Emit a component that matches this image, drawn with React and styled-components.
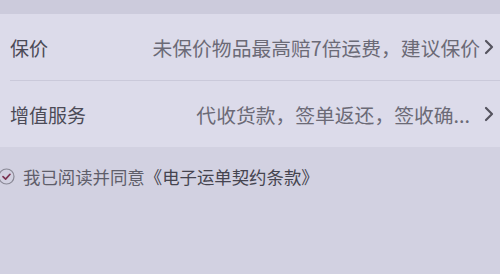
import React from "react";
import styled, { createGlobalStyle } from "styled-components";

const GlobalStyle = createGlobalStyle`
  html, body {
    margin: 0;
    padding: 0;
    background: #d2d1e1;
  }
  body {
    font-family: "Noto Sans CJK SC", "Noto Sans", sans-serif;
  }
`;

const Page = styled.div`
  width: 500px;
  height: 274px;
  overflow: hidden;
  background: #d2d1e1;
  display: flex;
  flex-direction: column;
`;

const TopBand = styled.div`
  height: 14px;
  background: #cccbdc;
`;

const Card = styled.div`
  background: #dcdbea;
  padding-left: 10px;
`;

const Row = styled.div`
  height: 66px;
  display: flex;
  align-items: center;
  padding-right: 6px;
  border-bottom: ${(p) => (p.$last ? "none" : "1px solid #cac9da")};
`;

const Label = styled.div`
  font-size: 19px;
  color: #4b4a56;
  flex-shrink: 0;
`;

const Value = styled.div`
  flex: 1;
  text-align: right;
  font-size: 19.8px;
  color: #6b6a76;
  white-space: nowrap;
  padding-right: ${(p) => p.$gap}px;
`;

const Arrow = styled.svg`
  width: 10px;
  height: 16px;
  flex-shrink: 0;
`;

const Agree = styled.div`
  display: flex;
  align-items: center;
  gap: 8px;
  margin-top: 17px;
`;

const Check = styled.svg`
  width: 17px;
  height: 17px;
  margin-left: -2px;
`;

const AgreeText = styled.span`
  font-size: 17.4px;
  color: #5f5e6a;
`;

const Contract = styled.span`
  color: #45444f;
`;

function Chevron() {
  return (
    <Arrow viewBox="0 0 10 16">
      <path d="M2 2 L8 8 L2 14" fill="none" stroke="#55545f" strokeWidth="2.2" strokeLinecap="round" strokeLinejoin="round" />
    </Arrow>
  );
}

export default function App() {
  return (
    <>
      <GlobalStyle />
      <Page>
        <TopBand />
        <Card>
          <Row>
            <Label>保价</Label>
            <Value $gap={4}>未保价物品最高赔7倍运费，建议保价</Value>
            <Chevron />
          </Row>
          <Row $last>
            <Label>增值服务</Label>
            <Value $gap={14}>代收货款，签单返还，签收确...</Value>
            <Chevron />
          </Row>
        </Card>
        <Agree>
          <Check viewBox="0 0 17 17">
            <circle cx="8.5" cy="8.5" r="7.5" fill="none" stroke="#8a8996" strokeWidth="1.2" />
            <path d="M5 8.7 L7.6 11.1 L12 6.3" fill="none" stroke="#7b3452" strokeWidth="1.7" strokeLinecap="round" strokeLinejoin="round" />
          </Check>
          <AgreeText>
            我已阅读并同意<Contract>《电子运单契约条款》</Contract>
          </AgreeText>
        </Agree>
      </Page>
    </>
  );
}
